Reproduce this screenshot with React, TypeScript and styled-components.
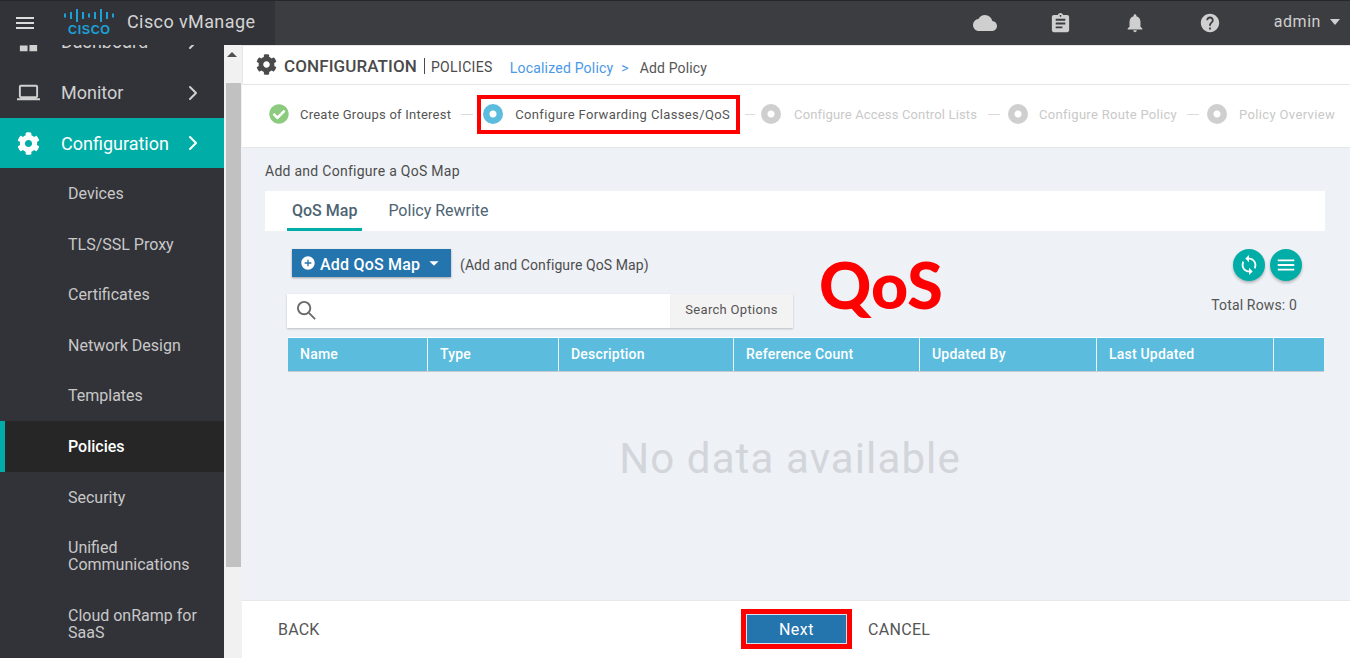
import styled, { createGlobalStyle } from 'styled-components';
import { FaCog, FaCheckCircle } from 'react-icons/fa';
import { MdCloud, MdAssignment, MdNotifications, MdHelp, MdLaptop, MdSync, MdMenu, MdDashboard, MdAddCircle, MdArrowDropDown } from 'react-icons/md';
import { LuChevronRight } from 'react-icons/lu';

const GlobalStyle = createGlobalStyle`
  html, body {
    margin: 0;
    height: 100%;
    overflow: hidden;
    background: #eef1f6;
    font-family: Roboto, "Liberation Sans", sans-serif;
  }
  * { box-sizing: border-box; }
`;

const subItems = ['Devices', 'TLS/SSL Proxy', 'Certificates', 'Network Design', 'Templates', 'Policies', 'Security', 'Unified Communications', 'Cloud onRamp for SaaS'];
const columns = [
  { name: 'Name', width: 140 },
  { name: 'Type', width: 131 },
  { name: 'Description', width: 175 },
  { name: 'Reference Count', width: 186 },
  { name: 'Updated By', width: 177 },
  { name: 'Last Updated', width: 177 },
  { name: '', width: 50 },
];
const logoBars = [4, 7, 13, 7, 4, 7, 13, 7, 4];

const App = () => {
  return (
    <Page>
      <GlobalStyle />
      <Header>
        <Brand>
          <Burger><MdMenu /></Burger>
          <Logo>
            <svg width="50" height="13" viewBox="0 0 50 13">
              {logoBars.map((h, i) => (
                <rect key={i} x={i * 6} y={(13 - h) / 2} width="2" height={h} fill="#1ba0d7" />
              ))}
            </svg>
            <LogoText>CISCO</LogoText>
          </Logo>
          <ProductName>Cisco vManage</ProductName>
        </Brand>
        <HeaderIcons>
          <HeaderIcon $size={24}><MdCloud /></HeaderIcon>
          <HeaderIcon $size={23}><MdAssignment /></HeaderIcon>
          <HeaderIcon $size={22}><MdNotifications /></HeaderIcon>
          <HeaderIcon $size={22}><MdHelp /></HeaderIcon>
          <UserName>admin</UserName>
          <Caret />
        </HeaderIcons>
      </Header>

      <Body>
        <Sidebar>
          <SideList>
            <TopItem>
              <TopIcon><MdDashboard /></TopIcon>
              <TopLabel>Dashboard</TopLabel>
              <Chevron><LuChevronRight /></Chevron>
            </TopItem>
            <TopItem>
              <TopIcon><MdLaptop /></TopIcon>
              <TopLabel>Monitor</TopLabel>
              <Chevron><LuChevronRight /></Chevron>
            </TopItem>
            <TopItem $active>
              <TopIcon><FaCog /></TopIcon>
              <TopLabel $active>Configuration</TopLabel>
              <Chevron><LuChevronRight /></Chevron>
            </TopItem>
            {subItems.map((item) => (
              <SubItem key={item} $active={item === 'Policies'}>{item}</SubItem>
            ))}
          </SideList>
        </Sidebar>

        <ScrollTrack>
          <ScrollArrow />
          <ScrollThumb />
        </ScrollTrack>

        <Main>
          <TitleBar>
            <TitleGear><FaCog /></TitleGear>
            <PageTitle>CONFIGURATION</PageTitle>
            <PageSub>POLICIES</PageSub>
            <Crumb href="#">Localized Policy</Crumb>
            <CrumbSep>&gt;</CrumbSep>
            <CrumbCurrent>Add Policy</CrumbCurrent>
          </TitleBar>

          <Stepper>
            <Step>
              <DoneIcon><FaCheckCircle /></DoneIcon>
              <StepLabel $track={0.24}>Create Groups of Interest</StepLabel>
            </Step>
            <Connector $before={10} $after={4} />
            <Step $current>
              <StepDot $state="current" />
              <StepLabel $track={0.37}>Configure Forwarding Classes/QoS</StepLabel>
            </Step>
            <Connector $before={5} $width={10} $after={6} />
            <Step $gap={13}>
              <StepDot $state="todo" />
              <StepLabel $muted $track={0.15}>Configure Access Control Lists</StepLabel>
            </Step>
            <Connector $before={11} $after={8} />
            <Step>
              <StepDot $state="todo" />
              <StepLabel $muted $track={0.3}>Configure Route Policy</StepLabel>
            </Step>
            <Connector $before={10} $after={8} />
            <Step $gap={12}>
              <StepDot $state="todo" />
              <StepLabel $muted $track={0.35}>Policy Overview</StepLabel>
            </Step>
          </Stepper>

          <Content>
            <SectionTitle>Add and Configure a QoS Map</SectionTitle>
            <Tabs>
              <Tab $active>QoS Map</Tab>
              <Tab>Policy Rewrite</Tab>
            </Tabs>

            <Panel>
              <Toolbar>
                <ToolbarLeft>
                  <AddRow>
                    <AddButton>
                      <MdAddCircle />
                      <span>Add QoS Map</span>
                      <MdArrowDropDown />
                    </AddButton>
                    <AddHint>(Add and Configure QoS Map)</AddHint>
                  </AddRow>
                  <SearchBox>
                    <SearchIcon viewBox="0 0 22 22">
                      <circle cx="8.5" cy="8.5" r="6.5" fill="none" stroke="#6b6b6b" strokeWidth="2" />
                      <path d="M13.5 13.5 L20 20" stroke="#6b6b6b" strokeWidth="2" />
                    </SearchIcon>
                    <SearchOptions>Search Options</SearchOptions>
                  </SearchBox>
                </ToolbarLeft>
                <ToolbarRight>
                  <RoundButtons>
                    <RoundButton><MdSync /></RoundButton>
                    <RoundButton><MdMenu /></RoundButton>
                  </RoundButtons>
                  <TotalRows>Total Rows: 0</TotalRows>
                </ToolbarRight>
              </Toolbar>

              <TableHead>
                {columns.map((col, i) => (
                  <HeadCell key={i} $w={col.width}>{col.name}</HeadCell>
                ))}
              </TableHead>
              <EmptyState>No data available</EmptyState>
            </Panel>

            <Annotation>QoS</Annotation>
          </Content>

          <Footer>
            <BackLink>BACK</BackLink>
            <FooterCenter>
              <NextHighlight>
                <NextButton>Next</NextButton>
              </NextHighlight>
              <CancelLink>CANCEL</CancelLink>
            </FooterCenter>
          </Footer>
        </Main>
      </Body>
    </Page>
  );
};

export default App;

const Page = styled.div`
  width: 1350px;
  height: 658px;
  display: flex;
  flex-direction: column;
  overflow: hidden;
`;

const Header = styled.header`
  height: 45px;
  flex: none;
  display: flex;
  justify-content: space-between;
  background: #3c3d40;
  border-top: 1px solid #26272a;
`;

const Brand = styled.div`
  width: 275px;
  display: flex;
  align-items: center;
  background: #323338;
`;

const Burger = styled.div`
  width: 50px;
  padding-left: 13px;
  display: flex;
  color: #dcdcdc;
  svg { font-size: 24px; }
`;

const Logo = styled.div`
  width: 77px;
  padding-left: 14px;
  margin-top: -1px;
  display: flex;
  flex-direction: column;
  align-items: flex-start;
`;

const LogoText = styled.span`
  margin: 2px 0 0 4px;
  font: bold 12.5px/12px "Liberation Sans", sans-serif;
  letter-spacing: 0.6px;
  color: #1ba0d7;
`;

const ProductName = styled.span`
  font-size: 18px;
  letter-spacing: 0.4px;
  color: #d4d4d4;
  margin-top: -3px;
`;

const HeaderIcons = styled.div`
  display: flex;
  align-items: center;
  padding-right: 10px;
  color: #cfcfcf;
`;

const HeaderIcon = styled.span<{ $size: number }>`
  width: 75px;
  display: flex;
  justify-content: center;
  svg { font-size: ${(p) => p.$size}px; }
`;

const UserName = styled.span`
  margin-left: 26px;
  font-size: 16px;
  letter-spacing: 0.55px;
  margin-top: -3px;
`;

const Caret = styled.span`
  margin-left: 9px;
  margin-top: -3px;
  border-left: 5px solid transparent;
  border-right: 5px solid transparent;
  border-top: 6px solid #cfcfcf;
`;

const Body = styled.div`
  flex: 1;
  display: flex;
  min-height: 0;
`;

const Sidebar = styled.nav`
  width: 224px;
  flex: none;
  overflow: hidden;
  background: #323338;
`;

// the list is scrolled a little past its first row
const SideList = styled.div`
  margin-top: -28px;
`;

const TopItem = styled.div<{ $active?: boolean }>`
  height: ${(p) => (p.$active ? '50px' : '50.5px')};
  display: flex;
  align-items: center;
  background: ${(p) => (p.$active ? '#00ada7' : 'transparent')};
  color: ${(p) => (p.$active ? '#fff' : '#d0d0d0')};
`;

const TopIcon = styled.span`
  width: 61px;
  padding-left: 17px;
  display: flex;
  svg { font-size: 23px; }
`;

const TopLabel = styled.span<{ $active?: boolean }>`
  flex: 1;
  font-size: 18px;
  margin-top: ${(p) => (p.$active ? '0' : '-1px')};
`;

const Chevron = styled.span`
  width: 43px;
  display: flex;
  svg { font-size: 24px; }
`;

const SubItem = styled.div<{ $active?: boolean }>`
  padding: 17px 20px 16.6px ${(p) => (p.$active ? '63px' : '68px')};
  font-size: 16px;
  line-height: 17px;
  font-weight: ${(p) => (p.$active ? 500 : 400)};
  color: ${(p) => (p.$active ? '#fff' : '#c8c8c8')};
  background: ${(p) => (p.$active ? '#262626' : 'transparent')};
  border-left: ${(p) => (p.$active ? '5px solid #00ada7' : 'none')};
`;

const ScrollTrack = styled.div`
  width: 18px;
  flex: none;
  padding-left: 2px;
  background: #f1f1f1;
`;

const ScrollArrow = styled.div`
  width: 0;
  margin: 6px 0 0 1px;
  height: 6px;
  border-left: 5px solid transparent;
  border-right: 5px solid transparent;
  border-bottom: 5px solid #505050;
`;

const ScrollThumb = styled.div`
  width: 15px;
  height: 484px;
  margin-top: 26px;
  background: #c1c1c1;
`;

const Main = styled.main`
  flex: 1;
  min-width: 0;
  display: flex;
  flex-direction: column;
`;

const TitleBar = styled.div`
  height: 40px;
  flex: none;
  display: flex;
  align-items: center;
  padding: 5px 0 0 13px;
  background: #fff;
  border: 1px solid #e6e6e6;
  border-right: none;
`;

const TitleGear = styled.span`
  display: flex;
  margin: -7px 7px 0 0;
  color: #4a4a4a;
  svg { font-size: 21px; }
`;

const PageTitle = styled.span`
  font-size: 17px;
  font-weight: 500;
  letter-spacing: 0.1px;
  color: #4a4a4a;
  padding-right: 7px;
  margin-top: -3px;
  border-right: 1px solid #4a4a4a;
  line-height: 16px;
`;

const PageSub = styled.span`
  margin: -2px 17px 0 6px;
  font-size: 14px;
  letter-spacing: 0.35px;
  color: #4a4a4a;
`;

const Crumb = styled.a`
  font-size: 14px;
  letter-spacing: 0.2px;
  color: #4a98e8;
  text-decoration: none;
`;

const CrumbSep = styled.span`
  margin: 0 11px 0 8px;
  font-size: 14px;
  color: #4a98e8;
`;

const CrumbCurrent = styled.span`
  font-size: 14px;
  letter-spacing: 0.15px;
  color: #555;
`;

const Stepper = styled.div`
  height: 63px;
  flex: none;
  display: flex;
  align-items: center;
  padding: 0 0 4px 27px;
  background: #fff;
  border-bottom: 1px solid #e4e6ea;
`;

const Step = styled.div<{ $current?: boolean; $gap?: number }>`
  display: flex;
  align-items: center;
  gap: ${(p) => (p.$current ? 12 : p.$gap ?? 11)}px;
  ${(p) => p.$current && `
    height: 39px;
    padding: 0 6px 0 2px;
    border: 4px solid #f00;
  `}
`;

const Connector = styled.span<{ $before: number; $after: number; $width?: number }>`
  width: ${(p) => p.$width ?? 12}px;
  height: 1px;
  margin: 0 ${(p) => p.$after}px 0 ${(p) => p.$before}px;
  background: #dcdcdc;
`;

const DoneIcon = styled.span`
  display: flex;
  color: #8ccb7f;
  svg { font-size: 20px; }
`;

const StepDot = styled.span<{ $state: 'current' | 'todo' }>`
  width: 20px;
  height: 20px;
  flex: none;
  border-radius: 50%;
  background: radial-gradient(circle, #fff 0 3px, ${(p) => (p.$state === 'current' ? '#5bbcde' : '#cfcfcf')} 4px);
`;

const StepLabel = styled.span<{ $muted?: boolean; $track: number }>`
  font-size: 13px;
  letter-spacing: ${(p) => p.$track}px;
  white-space: nowrap;
  color: ${(p) => (p.$muted ? '#c9c9c9' : '#555')};
`;

const Content = styled.section`
  position: relative;
  flex: 1;
  min-height: 0;
  padding: 14px 25px 0 23px;
  background: #eef1f6;
`;

const SectionTitle = styled.div`
  height: 29px;
  padding-top: 1px;
  font-size: 14px;
  line-height: 17px;
  letter-spacing: 0.27px;
  color: #4d4d4d;
`;

const Tabs = styled.div`
  height: 40px;
  display: flex;
  gap: 21px;
  padding-left: 22px;
  background: #fff;
`;

const Tab = styled.div<{ $active?: boolean }>`
  padding: 0 5px;
  font-size: 16px;
  line-height: 40px;
  font-weight: ${(p) => (p.$active ? 500 : 400)};
  color: #4d6473;
  border-bottom: ${(p) => (p.$active ? '3px solid #00ada7' : 'none')};
`;

const Panel = styled.div`
  padding: 18px 0 0 22px;
`;

const Toolbar = styled.div`
  display: flex;
  justify-content: space-between;
  padding-right: 23px;
`;

const ToolbarLeft = styled.div`
  display: flex;
  flex-direction: column;
`;

const AddRow = styled.div`
  display: flex;
  align-items: center;
  padding-left: 5px;
  gap: 9px;
`;

const AddButton = styled.div`
  width: 159px;
  height: 28px;
  display: flex;
  align-items: center;
  padding-left: 8px;
  background: #2474ad;
  color: #fff;
  font-size: 16px;
  font-weight: 500;
  letter-spacing: 0.2px;
  box-shadow: 0 1px 2px rgba(0, 0, 0, 0.35);
  span { margin-top: 2px; }
  svg:first-child { font-size: 16px; margin-right: 4px; }
  svg:last-child { font-size: 22px; margin-left: 3px; }
`;

const AddHint = styled.span`
  margin-top: 4px;
  font-size: 14px;
  letter-spacing: 0.1px;
  color: #4d4d4d;
`;

const SearchBox = styled.div`
  width: 506px;
  height: 34px;
  margin-top: 17px;
  display: flex;
  align-items: center;
  justify-content: space-between;
  padding-left: 9px;
  background: #fff;
  box-shadow: 0 1px 2px rgba(0, 0, 0, 0.22);
`;

const SearchIcon = styled.svg`
  width: 21px;
  height: 21px;
  margin-top: -2px;
`;

const SearchOptions = styled.div`
  width: 123px;
  height: 100%;
  padding-bottom: 4px;
  display: flex;
  align-items: center;
  justify-content: center;
  background: #f3f3f3;
  font-size: 13px;
  letter-spacing: 0.3px;
  color: #555;
`;

const ToolbarRight = styled.div`
  display: flex;
  flex-direction: column;
  align-items: flex-end;
`;

const RoundButtons = styled.div`
  display: flex;
  gap: 5px;
`;

const RoundButton = styled.div`
  width: 32px;
  height: 32px;
  display: flex;
  align-items: center;
  justify-content: center;
  border-radius: 50%;
  background: #00ada7;
  color: #fff;
  box-shadow: 0 2px 3px rgba(0, 0, 0, 0.25);
  svg { font-size: 22px; }
`;

const TotalRows = styled.div`
  margin: 16px 5px 0 0;
  font-size: 14px;
  letter-spacing: 0.15px;
  color: #555;
`;

const TableHead = styled.div`
  width: 1036px;
  height: 35px;
  margin: 9px 0 0 1px;
  display: flex;
  background: #5bbcde;
  border-top: 1px solid #fff;
  border-bottom: 1px solid #c8ccd2;
`;

const HeadCell = styled.div<{ $w: number }>`
  width: ${(p) => p.$w}px;
  flex: none;
  padding-left: 12px;
  font-size: 14px;
  font-weight: 500;
  line-height: 33px;
  letter-spacing: 0.2px;
  color: #fff;
  border-right: 1px solid #e8f5fa;
  &:last-child { border-right: none; }
`;

const EmptyState = styled.div`
  margin-top: 62px;
  padding-right: 32px;
  text-align: center;
  font-size: 42px;
  line-height: 50px;
  letter-spacing: 1.12px;
  color: #d2d5da;
`;

const Annotation = styled.div`
  position: absolute;
  left: 577px;
  top: 97px;
  font-family: Lato, "Open Sans", sans-serif;
  font-size: 64.5px;
  line-height: 78px;
  font-weight: 900;
  color: #f00;
`;

const Footer = styled.footer`
  height: 58px;
  flex: none;
  display: flex;
  align-items: center;
  padding: 0 0 1px 36px;
  background: #fff;
  border-top: 1px solid #e6e8ec;
`;

const BackLink = styled.span`
  width: 463px;
  font-size: 16px;
  letter-spacing: 0.2px;
  color: #555;
`;

const FooterCenter = styled.div`
  display: flex;
  align-items: center;
  gap: 16px;
`;

const NextHighlight = styled.div`
  border: 5px solid #f00;
`;

const NextButton = styled.div`
  width: 101px;
  height: 30px;
  text-align: center;
  font-size: 16px;
  line-height: 30px;
  letter-spacing: 0.5px;
  color: #fff;
  background: #2474ad;
  border: 1px solid #d5e3ee;
`;

const CancelLink = styled.span`
  font-size: 16px;
  letter-spacing: 0.3px;
  color: #555;
`;
